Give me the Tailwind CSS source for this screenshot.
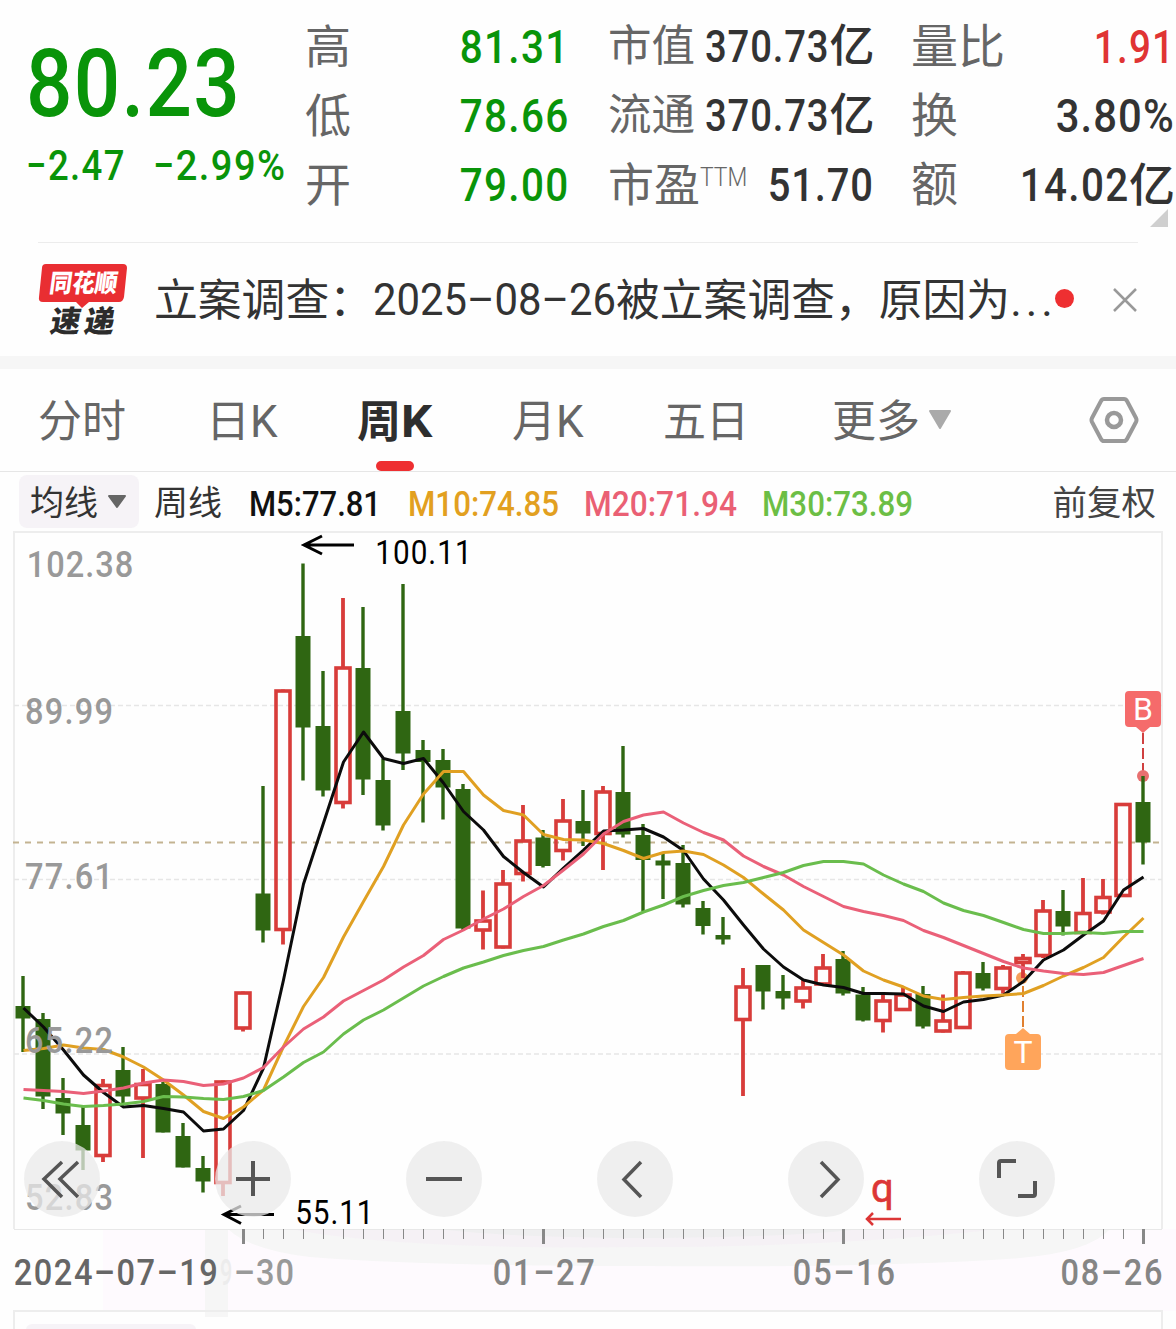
<!DOCTYPE html>
<html lang="zh-CN">
<head>
    <meta charset="UTF-8">
    <meta name="viewport" content="width=device-width, initial-scale=1.0">
    <title>周K - 行情</title>
    <script src="https://cdn.jsdelivr.net/npm/@tailwindcss/browser@4"></script>
</head>
<body class="bg-[#fefefe] w-[1176px] h-[1329px] overflow-hidden font-['Roboto','Noto_Sans_CJK_SC',sans-serif] text-[#333]">
    <!-- Quote header -->
    <header class="relative flex h-[242px] whitespace-nowrap leading-none">
        <div class="w-[305px] pl-[26px] pt-[35px] text-[#099409] font-medium">
            <div class="text-[95px] h-[106px] leading-[97px] origin-left scale-x-[.86] tracking-[1.5px]">80.23</div>
            <div class="flex text-[43px] leading-[48px]">
                <span class="w-[127px]"><span class="inline-block origin-left scale-x-[.85] tracking-[1.6px]">−2.47</span></span>
                <span class="inline-block origin-left scale-x-[.885] tracking-[1.6px]">−2.99%</span>
            </div>
        </div>
        <div class="w-[264px] pt-3 text-[47px]">
            <div class="flex h-[69px] items-center justify-between"><span class="text-[46px] text-[#666]">高</span><span class="text-[#099409] font-medium origin-right scale-x-[.86] tracking-[1.5px]">81.31</span></div>
            <div class="flex h-[69px] items-center justify-between"><span class="text-[46px] text-[#666]">低</span><span class="text-[#099409] font-medium origin-right scale-x-[.86] tracking-[1.5px]">78.66</span></div>
            <div class="flex h-[69px] items-center justify-between"><span class="text-[46px] text-[#666]">开</span><span class="text-[#099409] font-medium origin-right scale-x-[.86] tracking-[1.5px]">79.00</span></div>
        </div>
        <div class="w-[266px] ml-[39px] pt-3 text-[45px]">
            <div class="flex h-[69px] items-center"><span class="text-[43.5px] text-[#666]">市值</span><span class="ml-[-12px] font-medium origin-right scale-x-[.85] tracking-[1px]">370.73</span><span class="font-medium">亿</span></div>
            <div class="flex h-[69px] items-center"><span class="text-[43.5px] text-[#666]">流通</span><span class="ml-[-12px] font-medium origin-right scale-x-[.85] tracking-[1px]">370.73</span><span class="font-medium">亿</span></div>
            <div class="flex h-[69px] items-center"><span class="text-[46px] text-[#666]">市盈</span><span class="w-[46px] pb-[15px] text-[26px] text-[#666] font-light origin-left scale-x-[.88]">TTM</span><span class="ml-auto text-[47px] font-medium origin-right scale-x-[.85] tracking-[1px]">51.70</span></div>
        </div>
        <div class="w-[264px] ml-[37px] pt-3 text-[47px]">
            <div class="flex h-[69px] items-center"><span class="text-[47px] text-[#666]">量比</span><span class="ml-auto text-[#e03434] font-medium origin-right scale-x-[.82] tracking-[1.5px]">1.91</span></div>
            <div class="flex h-[69px] items-center"><span class="text-[47px] text-[#666]">换</span><span class="ml-auto font-medium origin-right scale-x-[.89] tracking-[1.2px]">3.80%</span></div>
            <div class="flex h-[69px] items-center"><span class="text-[47px] text-[#666]">额</span><span class="ml-auto font-medium origin-right scale-x-[.86] tracking-[1.5px]">14.02</span><span class="text-[46px] font-medium">亿</span></div>
        </div>
        <svg class="absolute left-[1150px] top-[209px] w-[18px] h-[18px]" viewBox="0 0 18 18"><path d="M18 0V18H0Z" fill="#cfcfcf"/></svg>
    </header>

    <!-- News strip -->
    <section class="mx-[38px] h-[114px] border-t border-[#ececec] flex items-center whitespace-nowrap">
        <svg class="w-[90px] h-[76px] shrink-0 overflow-visible" viewBox="38 261 90 76">
            <path d="M46 263H123Q127 263 127 267L124 296Q123 301 119 301H89L82 307L76 301H43Q38 301 39 296L42 267Q42 263 46 263Z" fill="#e92e32"/>
            <g font-family="Noto Sans CJK SC" font-weight="900" text-anchor="middle">
                <text transform="translate(82.5 291) skewX(-8)" font-size="25" fill="#fff" textLength="68" lengthAdjust="spacingAndGlyphs">同花顺</text>
                <text transform="translate(81 330.500) skewX(-10)" font-size="30" fill="#2c2c2c" textLength="64">速递</text>
            </g>
        </svg>
        <div class="ml-[26px] pt-[4px] flex items-center text-[43.8px] leading-none">
            <span class="w-[219px]">立案调查：</span>
            <span class="w-[243px]"><span class="inline-block origin-left scale-x-[.955] -translate-y-px">2025–08–26</span></span>
            <span>被立案调查，原因为</span>
            <span class="tracking-[4px]">...</span>
        </div>
        <span class="w-[19px] h-[19px] rounded-full bg-[#ee2f31] shrink-0 -ml-[2px] -mt-[3px]"></span>
        <svg class="ml-auto w-[26px] h-[26px] shrink-0" viewBox="0 0 26 26" stroke="#999" stroke-width="2.5"><path d="M2 2L24 24M24 2L2 24"/></svg>
    </section>

    <div class="h-[13px] bg-[#f6f6f6]"></div>

    <!-- Period tabs -->
    <nav class="relative flex items-center h-[103px] border-b border-[#e6e6e6] text-[44px] leading-none text-[#666] whitespace-nowrap">
        <span class="ml-[38px] pt-[4px] w-[168px]">分时</span>
        <span class="w-[151px] pt-[4px]">日K</span>
        <span class="w-[155px] pt-[4px] font-bold text-[#2e2e2e]">周<span class="inline-block origin-left scale-x-[1.12]">K</span></span>
        <span class="w-[151px] pt-[4px]">月K</span>
        <span class="w-[169px] pt-[4px] text-[43px]">五日</span>
        <span class="pt-[4px]">更多</span>
        <svg class="ml-[8px] w-[24px] h-[20px]" viewBox="0 0 24 20"><path d="M2 1H22L12 18Z" fill="#aaa" stroke="#aaa" stroke-width="2" stroke-linejoin="round"/></svg>
        <svg class="ml-[137px] w-[50px] h-[46px]" viewBox="0 0 50 46" fill="none" stroke="#999" stroke-linejoin="round"><path d="M15 2H35Q37 2 38 4L47 21Q48 23 47 25L38 42Q37 44 35 44H15Q13 44 12 42L3 25Q2 23 3 21L12 4Q13 2 15 2Z" stroke-width="4"/><circle cx="25" cy="23" r="7" stroke-width="4.5"/></svg>
        <span class="absolute left-[376px] top-[92px] w-[38px] h-[10px] rounded-full bg-[#ee2f31]"></span>
    </nav>

    <!-- Moving average legend -->
    <div class="flex h-[59px] pl-[19px] pr-[20px] pt-[3px] text-[34px] leading-none whitespace-nowrap">
        <div class="flex items-center w-[120px] h-[53px] rounded-lg bg-[#f6f3f7] pl-[11px]">
            <span class="pt-[2px]">均线</span>
            <svg class="ml-[9px] w-[20px] h-[16px]" viewBox="0 0 20 16"><path d="M2 2H18L10 13Z" fill="#666" stroke="#666" stroke-width="2" stroke-linejoin="round"/></svg>
        </div>
        <span class="ml-[15px] mt-[11px]">周线</span>
        <svg class="w-[700px] h-[53px] ml-[12px]" viewBox="234 475 700 53" font-family="Roboto" font-weight="500" font-size="35">
            <text x="249" y="516" textLength="132" lengthAdjust="spacingAndGlyphs" fill="#111">M5:77.81</text>
            <text x="408" y="516" textLength="151" lengthAdjust="spacingAndGlyphs" fill="#e2a020">M10:74.85</text>
            <text x="584" y="516" textLength="153" lengthAdjust="spacingAndGlyphs" fill="#ea6074">M20:71.94</text>
            <text x="762" y="516" textLength="151" lengthAdjust="spacingAndGlyphs" fill="#6cbe45">M30:73.89</text>
        </svg>
        <span class="ml-auto mt-[11px] text-[34.5px] text-[#444]">前复权</span>
    </div>

    <!-- K-line chart -->
    <main class="relative h-[698px]">
        <svg class="block w-[1176px] h-[698px] overflow-visible" viewBox="0 531 1176 698" fill="none">
            <path d="M14 1229V532H1162V1229" stroke="#ededed" stroke-width="2"/>
            <path d="M14 705.5H1162M14 879.5H1162M14 1054H1162" stroke="#e6e6e6" stroke-width="1.5" stroke-dasharray="5 3"/>
            <path d="M13 842.5H1162" stroke="#c3b391" stroke-width="2" stroke-dasharray="6 6"/>
            <path d="M1143 733V776" stroke="#d04040" stroke-width="2" stroke-dasharray="11 4"/>
            <circle cx="1143" cy="776" r="6" fill="#e87070"/>
            <circle cx="1022" cy="978" r="6" fill="#f5a05c"/>
            <path d="M1023 986V1030" stroke="#e08030" stroke-width="2" stroke-dasharray="11 4"/>
            <g id="candles"></g>
            <g id="averages" stroke-width="3" stroke-linejoin="round"></g>

            <!-- Price scale, digits condensed horizontally -->
            <g font-family="Roboto" font-weight="500" font-size="37" fill="#999" transform="scale(.88 1)">
                <text x="30.5" y="577" textLength="121">102.38</text>
                <text x="28.5" y="724" textLength="100">89.99</text>
                <text x="28.5" y="889" textLength="100">77.61</text>
                <text x="28.5" y="1053" textLength="100">65.22</text>
                <text x="28.5" y="1210" textLength="100">52.83</text>
            </g>

            <!-- High / low marks -->
            <g stroke="#000" stroke-width="3">
                <path d="M354 545H304M322 536L304 545L322 554"/>
                <path d="M274 1214.500H224M241 1206L224 1214.500L241 1223.500"/>
            </g>
            <g font-family="Roboto" font-size="33" fill="#000" transform="scale(.9 1)">
                <text x="417" y="564" textLength="107">100.11</text>
                <text x="328" y="1224" textLength="87">55.11</text>
            </g>

            <!-- Buy and T flags -->
            <path d="M1129 691H1157Q1161 691 1161 695V723Q1161 727 1157 727H1150L1143 733L1136 727H1129Q1125 727 1125 723V695Q1125 691 1129 691Z" fill="#f56b6b"/>
            <path d="M1009 1034H1016L1023 1028L1030 1034H1037Q1041 1034 1041 1038V1066Q1041 1070 1037 1070H1009Q1005 1070 1005 1066V1038Q1005 1034 1009 1034Z" fill="#ffa55b"/>
            <g font-family="Roboto" font-size="32" fill="#fff" text-anchor="middle">
                <text x="1143" y="720">B</text>
                <text x="1023" y="1063">T</text>
            </g>

            <text x="871" y="1202" font-family="Roboto" font-size="40" fill="#dc3636" stroke="#dc3636" stroke-width=".6">q</text>
            <path d="M901 1219H867M873 1213L867 1219L873 1225" stroke="#dc3636" stroke-width="2.500"/>
        </svg>

        <!-- Round controls -->
        <div class="absolute left-[24px] top-[610px] flex gap-[115px]">
            <button class="w-[76px] h-[76px] rounded-full bg-[#e9e9e9]/75"><svg class="w-full h-full" viewBox="0 0 76 76" fill="none" stroke="#555" stroke-width="3.500"><path d="M38 21L20 38L38 56M54 21L36 38L54 56"/></svg></button>
            <button class="w-[76px] h-[76px] rounded-full bg-[#e9e9e9]/75"><svg class="w-full h-full" viewBox="0 0 76 76" fill="none" stroke="#555" stroke-width="4"><path d="M21 38H55M38 20V55"/></svg></button>
            <button class="w-[76px] h-[76px] rounded-full bg-[#e9e9e9]/75"><svg class="w-full h-full" viewBox="0 0 76 76" fill="none" stroke="#555" stroke-width="4"><path d="M20 38H56"/></svg></button>
            <button class="w-[76px] h-[76px] rounded-full bg-[#e9e9e9]/75"><svg class="w-full h-full" viewBox="0 0 76 76" fill="none" stroke="#555" stroke-width="3.500"><path d="M44 21L27 38.500L44 56"/></svg></button>
            <button class="w-[76px] h-[76px] rounded-full bg-[#e9e9e9]/75"><svg class="w-full h-full" viewBox="0 0 76 76" fill="none" stroke="#555" stroke-width="3.500"><path d="M33 21L50 38.500L33 56"/></svg></button>
            <button class="w-[76px] h-[76px] rounded-full bg-[#e9e9e9]/75"><svg class="w-full h-full" viewBox="0 0 76 76" fill="none" stroke="#555" stroke-width="4"><path d="M20 37V22Q20 20 22 20H37M56 40V53Q56 55 54 55H39"/></svg></button>
        </div>
    </main>

    <!-- Date axis -->
    <svg class="block w-[1176px] h-[100px]" viewBox="0 1229 1176 100">
        <path d="M103 1229H1176V1311H103Z" fill="#fefafe"/>
        <path d="M205 1229H228V1317H205Z" fill="#f6f6f6"/>
        <path d="M228 1229H1110Q1090 1252 1020 1258Q880 1268 640 1266Q420 1266 310 1257Q250 1250 228 1229Z" fill="#f6f6f6"/>
        <path d="M290 1229H1000Q840 1247 640 1247Q400 1250 290 1229Z" fill="#f5f1f5"/>
        <path d="M440 1229H860Q800 1237 640 1238Q500 1237 440 1229Z" fill="#efeff0"/>
        <path d="M14 1229H1162" stroke="#e8e8e8" stroke-width="2"/>
        <g id="ticks" stroke="#888"></g>
        <g font-family="Roboto" font-weight="500" font-size="37" fill="#858585" transform="scale(.88 1)">
            <text x="15.500" y="1285" textLength="232" fill="#666">2024–07–19</text>
            <text x="250" y="1285" textLength="14" lengthAdjust="spacingAndGlyphs" fill="#ececec">9</text>
            <text x="266" y="1285" textLength="68" fill="#999">–30</text>
            <text x="560" y="1285" textLength="116">01–27</text>
            <text x="901" y="1285" textLength="116">05–16</text>
            <text x="1205" y="1285" textLength="116">08–26</text>
        </g>
        <path d="M14 1329V1311H1162V1329" fill="none" stroke="#ededed" stroke-width="2"/>
        <rect x="26" y="1324" width="170" height="20" rx="6" fill="#f6f3f7"/>
    </svg>

    <script>
        // direction, high, body top, body bottom, low
        const candles = [
            ['g', 976, 1006, 1018.5, 1052], ['g', 1013, 1019, 1096.5, 1109], ['g', 1078, 1098, 1113.5, 1135],
            ['g', 1107, 1125, 1150.5, 1170], ['r', 1079, 1084, 1157, 1162], ['g', 1047, 1070, 1096.5, 1104],
            ['r', 1069, 1083, 1099.5, 1158], ['g', 1082, 1084, 1132.5, 1132.5], ['g', 1123, 1136, 1167.5, 1167.5],
            ['g', 1156, 1168, 1181.5, 1192.5], ['r', 1080.5, 1080.5, 1184, 1196], ['r', 991.5, 991.5, 1029.5, 1031.5],
            ['g', 786, 893.5, 930.5, 942.5], ['r', 689.5, 689.5, 931, 944.5], ['g', 563.5, 636, 727.5, 780.5],
            ['g', 671, 726, 790.5, 796.5], ['r', 598, 666.5, 804, 808.5], ['g', 607, 668, 779.5, 795],
            ['g', 758.5, 780, 825.5, 830.5], ['g', 584, 711, 753.5, 770], ['g', 740, 750, 762, 822.5],
            ['g', 749, 760, 787.5, 819.5], ['g', 784, 789, 928.5, 930.5], ['r', 890.5, 919.5, 931.5, 949.5],
            ['r', 870, 882.5, 948.5, 948.5], ['r', 805, 839.5, 875, 881.5], ['g', 830, 837.5, 866, 867.5],
            ['r', 799, 819.5, 852, 860.5], ['g', 790, 821, 833.5, 846], ['r', 786, 790.5, 835, 870],
            ['g', 746, 792, 834.5, 837.5], ['g', 824, 835, 860, 911.5], ['g', 852.5, 860.5, 865.5, 899],
            ['g', 845, 863, 904.5, 907.5], ['g', 901, 908, 926, 934.5], ['g', 917, 935, 939.5, 944.5],
            ['r', 968, 985.5, 1021, 1096], ['g', 965, 965, 991.5, 1009.5], ['g', 975, 991, 998.5, 1009.5],
            ['r', 980, 986.5, 1002.5, 1008.5], ['r', 954, 966.5, 985.5, 985.5], ['g', 951, 959, 993.5, 995.5],
            ['g', 987, 994.5, 1020.5, 1021.5], ['r', 994, 999.5, 1022, 1032.5], ['r', 986, 993.5, 1011, 1011],
            ['g', 986, 994, 1026.5, 1028.5], ['r', 994.5, 1019.5, 1032.5, 1032.5], ['r', 971, 971.5, 1029, 1029],
            ['g', 962, 973, 988.5, 990.5], ['r', 965, 966.5, 990, 993.5], ['r', 954, 957, 964, 978],
            ['r', 900, 909.5, 957, 958], ['g', 890, 911, 926.5, 935.5], ['r', 878, 912, 934, 934],
            ['r', 879, 896, 913.5, 914.5], ['r', 803, 803, 897, 897], ['g', 776, 802, 842.5, 864.5]
        ];

        const averages = {
            '#0c0c0c': [1008, 1027, 1050, 1075, 1092.5, 1107, 1105.5, 1108.5, 1112, 1131, 1129, 1110.5, 1068, 980, 884, 823, 762, 732, 758.5, 763.5, 758.5, 783, 811.5, 830, 856.5, 872.5, 887, 868, 850, 831, 830, 828.5, 837, 850.5, 879, 900, 925, 949, 967, 980, 985, 987.5, 993.5, 993.5, 994, 1006, 1011.5, 1002, 999.5, 995, 981.5, 960, 950, 935, 921, 890, 877],
            '#e0a022': [1050.5, 1048.5, 1045, 1048, 1049.5, 1057, 1067, 1080, 1095, 1111.5, 1118.5, 1107, 1090, 1046.5, 1006.5, 977.5, 937, 901.5, 866.5, 825, 794, 771.5, 771.5, 795, 810.5, 815, 834.5, 839.5, 840, 843.5, 850.5, 858.5, 852.5, 851, 854.5, 865, 877.5, 894, 910, 930, 942.5, 955, 971, 980, 987, 996, 999.5, 997.5, 996, 995, 993.5, 985.5, 976, 967.5, 957.5, 937, 918],
            '#ea6078': [1089.5, 1090.5, 1091.5, 1093.5, 1091, 1088, 1083, 1080, 1081.5, 1085.5, 1084, 1078, 1067.5, 1047, 1029, 1017, 1001, 990.5, 980, 967, 955.5, 939.5, 930, 919, 909, 896.5, 885.5, 870, 854, 834, 821.5, 815, 812, 823, 832.5, 840, 856, 866.5, 875, 886.5, 896.5, 906.5, 911.5, 915.5, 920.5, 930.5, 937.5, 945.5, 953.5, 961.5, 968, 971, 973.5, 974.5, 972.5, 965.5, 958.5],
            '#6abd4d': [1098, 1100.5, 1104, 1106.5, 1105.5, 1104, 1101.5, 1096.5, 1097, 1098.5, 1099.5, 1096.5, 1090.5, 1077, 1062.5, 1052, 1034, 1020, 1010, 998, 986, 976.5, 968, 962, 955.5, 950.5, 946.5, 940, 934, 926.5, 920.5, 912, 905, 896.5, 890.5, 885.5, 882.5, 877.5, 872.5, 865.5, 861.5, 861.5, 864, 875, 884, 891.5, 903, 910.5, 915.5, 922.5, 929.5, 933.5, 933.5, 932.5, 933.5, 931.5, 931.5]
        };

        document.getElementById('candles').innerHTML = candles.map(([dir, high, top, bottom, low], i) => {
            const x = 23 + i * 20;
            if (dir === 'g') {
                return `<path d="M${x} ${high}V${low}" stroke="#2f6612" stroke-width="3.4"/><rect x="${x - 7.5}" y="${top}" width="15" height="${bottom - top}" fill="#2f6612"/>`;
            }
            return `<path d="M${x} ${high}V${top + 1}M${x} ${bottom - 1}V${low}" stroke="#d83c3a" stroke-width="3.8"/><rect x="${x - 7}" y="${top + 1.5}" width="14" height="${bottom - top - 3}" stroke="#d83c3a" stroke-width="3.6"/>`;
        }).join('');

        document.getElementById('averages').innerHTML = Object.entries(averages).map(([color, ys]) =>
            `<polyline stroke="${color}" points="${ys.map((y, i) => `${23.5 + i * 20},${y}`).join(' ')}"/>`
        ).join('');

        let ticks = '';
        for (let x = 243; x <= 1143; x += 20) {
            const major = (x - 243) % 300 === 0;
            ticks += `<path d="M${x + 0.5} 1229V${major ? 1244 : 1239}" stroke-width="${major ? 3 : 1}"/>`;
        }
        document.getElementById('ticks').innerHTML = ticks;
    </script>
</body>
</html>
